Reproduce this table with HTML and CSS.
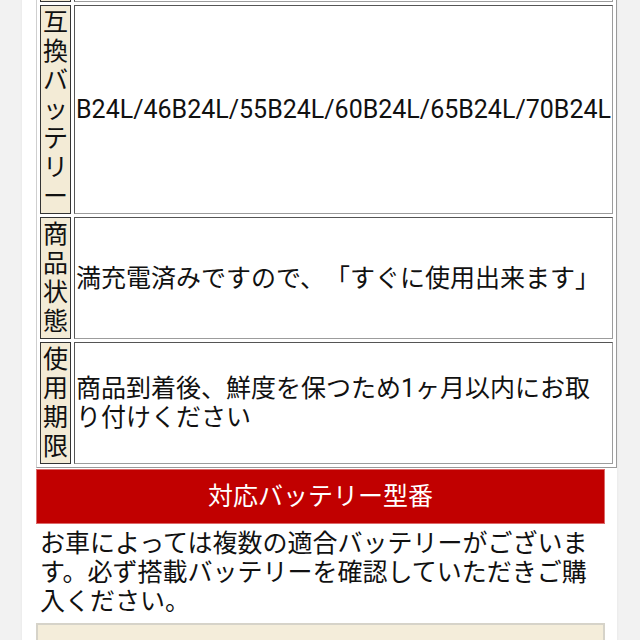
FILE: index.html
```html
<!DOCTYPE html>
<html lang="ja">
<head>
<meta charset="utf-8">
<title>バッテリー</title>
<link rel="stylesheet" href="styles.css">
</head>
<body>
<div class="page">
  <table class="spec">
    <tr class="spec-hidden"><th></th><td></td></tr>
    <tr><th>互換バッテリー</th><td class="nowrap">B24L/46B24L/55B24L/60B24L/65B24L/70B24L</td></tr>
    <tr><th>商品状態</th><td>満充電済みですので、「すぐに使用出来ます」</td></tr>
    <tr><th>使用期限</th><td>商品到着後、鮮度を保つため1ヶ月以内にお取り付けください</td></tr>
  </table>
  <h2 class="section-title">対応バッテリー型番</h2>
  <p class="note">お車によっては複数の適合バッテリーがございます。必ず搭載バッテリーを確認していただきご購入ください。</p>
  <div class="model-box"></div>
</div>
</body>
</html>
```
FILE: styles.css
```css
html, body {
  margin: 0;
  padding: 0;
}
body {
  background: #f2f2f2;
  font-family: Roboto, "Noto Sans CJK JP", sans-serif;
  font-size: 25px;
  line-height: 29px;
  color: #111;
  text-spacing-trim: space-all;
}
.page {
  width: 569px;
  margin-left: 22px;
  padding: 0 12px 0 14px;
  background: #fff;
  min-height: 700px;
  box-shadow: 0 0 3px rgba(0, 0, 0, 0.06);
}
.spec {
  margin-top: -66px;
  border-collapse: separate;
  border-spacing: 3px;
  border: 1px solid;
  border-color: #cfcfcf #9a9a9a #9a9a9a #cfcfcf;
}
.spec th {
  width: 25px;
  padding: 2px;
  border: 1px solid #333;
  background: #f3ebd6;
  font-weight: normal;
  text-align: center;
  line-break: anywhere;
  word-break: break-all;
  vertical-align: middle;
}
.spec td {
  padding: 2px 1px;
  border: 1px solid;
  border-color: #555 #9c9c9c #9c9c9c #555;
  vertical-align: middle;
}
.spec .spec-hidden th,
.spec .spec-hidden td {
  height: 58px;
}
.spec td.nowrap {
  white-space: nowrap;
}
.section-title {
  margin: 1px 0 0;
  padding: 12px 0;
  background: #c10000;
  border: 1px solid #dc6a6a;
  color: #fff;
  font-size: 25px;
  font-weight: normal;
  line-height: 29px;
  text-align: center;
}
.note {
  margin: 5px 0 7px;
  padding: 0 4px;
}
.model-box {
  border: 2px solid #d6d3c9;
  background: #f4edda;
  min-height: 80px;
}
```
